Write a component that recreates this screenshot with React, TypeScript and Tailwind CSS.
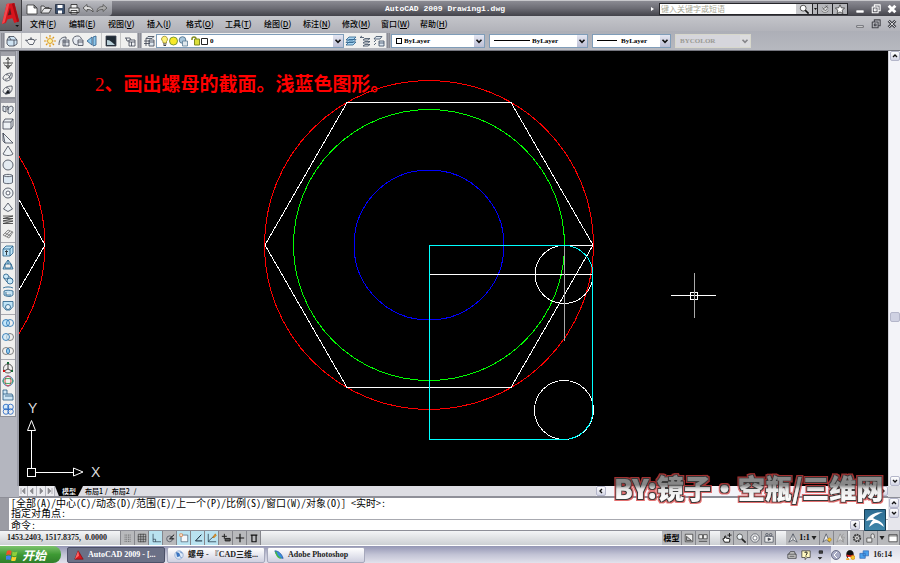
import type { ReactNode } from "react";

interface IconProps {
  children: ReactNode;
  size?: string;
}

function Icon({ children, size = "size-3" }: IconProps) {
  return (
    <svg viewBox="0 0 12 12" className={`${size} shrink-0`} fill="none" stroke="#3c4250" strokeWidth=".8" strokeLinejoin="round" aria-hidden="true">
      {children}
    </svg>
  );
}

interface Tool {
  label: string;
  icon: ReactNode;
  on?: boolean;
}

const quickAccess: Tool[] = [
  { label: "新建", icon: <path d="M1 2h7l3 3v6H1zM8 2v3h3" fill="#fff" stroke="#333" /> },
  { label: "打开", icon: <path d="M1 10V3h3l1 1.5h4V6M1 10l3-4.500h7.5L9 10z" fill="#e8e8ea" stroke="#333" /> },
  { label: "保存", icon: <><path d="M1.500 1.500h9v9h-9z" fill="#3b4f6c" stroke="#222b3b" /><path d="M3.500 2h5v3h-5zM4 7.500h4v3H4z" fill="#fff" stroke="none" /></> },
  { label: "打印", icon: <path d="M3 5V1.500h6V5M1 5h10v4.500H1zM3 7.500h6V11H3z" fill="#eee" stroke="#222" /> },
  { label: "放弃", icon: <path d="M1 5l4-3.500v2c4 0 6 2 6 5.500-1-2-3-2.500-6-2.500v2z" fill="#ddd" stroke="#444" /> },
  { label: "重做", icon: <path d="M11 5L7 1.500v2c-4 0-6 2-6 5.500 1-2 3-2.500 6-2.500v2z" fill="#aaa" stroke="#555" /> },
];

const menus = [
  ["文件", "F"],
  ["编辑", "E"],
  ["视图", "V"],
  ["插入", "I"],
  ["格式", "O"],
  ["工具", "T"],
  ["绘图", "D"],
  ["标注", "N"],
  ["修改", "M"],
  ["窗口", "W"],
  ["帮助", "H"],
];

const renderTools: Tool[][] = [
  [{ label: "隐藏", icon: <path d="M1 5l2-3.500h5L11 5v4l-3 2H3L1 9zM1 5h7v6M8 5h3M3 1.500L5 5" fill="#cfe3f2" /> }],
  [{ label: "渲染", icon: <path d="M3 4.500h6l.5 2-1.500 3H4.500L2.500 7 .5 5l2.500.5M9.500 6L11.500 4M5 4l1-1.500L7 4" fill="#f4f4f4" /> }],
  [
    { label: "光源", icon: <><circle cx="6" cy="6" r="2.500" fill="#fff3a0" stroke="#d08a10" /><path d="M6 0v2.500M6 9.500V12M0 6h2.500M9.500 6H12M2 2l1.500 1.500M8.500 8.500L10 10M10 2L8.500 3.500M2 10l1.500-1.500" stroke="#e09a18" strokeWidth="1.200" /></> },
    { label: "阳光特性", icon: <path d="M1 10c0-4 1-8 7-8v2M5 5h6v6H5zM5 7h6M7 5v6" fill="#e0e4ea" /> },
    { label: "材质", icon: <path d="M9.500 4A4.500 4.500 0 1 0 5 10M6 5h5v5.500H6zM6 7h5" fill="#e6eaf0" /> },
    { label: "贴图", icon: <path d="M1 6l5-4v8zM7 2l3-1v9l-3 1z" fill="#8cc6ea" stroke="#2d5c85" /> },
  ],
  [{ label: "渲染环境", icon: <><path d="M1 1h10v10H1z" fill="#1f2a34" /><path d="M2 10V5c3 0 5 2 8 5z" fill="#b8cfd8" stroke="none" /></> }],
  [{ label: "高级渲染设置", icon: <path d="M1 3h5l1 2M2 3l1 3h2M5 5h6v6H5zM5 7h6M7.500 7v4" fill="#eef0f3" /> }],
];

const layerTools: Tool[] = [
  { label: "置为当前", icon: <path d="M1 10l3-3h7l-3 3zM1 7.500l3-3h7l-3 3zM1 5l3-3h7L8 5z" fill="#a9d6f2" stroke="#2b5f8a" /> },
  { label: "上一个图层", icon: <path d="M1 2.500h4M1 2.500L3 1M4 5l2-1.500h5L9 5zM4 8l2-1.500h5L9 8zM4 11l2-1.500h5L9 11z" fill="#f3f3f3" stroke="#3a4a60" /> },
  { label: "图层状态", icon: <path d="M1 4l2-2.500h6L7 4zM1 7l2-2M1 10l2-2M6 6h5v5H6zM6 8h5" fill="#dbe5ee" stroke="#3a4a60" /> },
];

const orbitTools: Tool[] = [
  { label: "三维平移", icon: <path d="M6 .5v11M1 6h10M4 3l2-2.500L8 3M4 9l2 2.500L8 9M2 7.500c2 2 6 2 8 0" stroke="#222" /> },
  { label: "动态观察", icon: <path d="M1 8c0-4 4-6 9-6 1 5-2 8-6 8zM3 8c2 1 5-2 6-5M4 4c2-1 4 1 4 4" /> },
  { label: "连续观察", icon: <><path d="M1 8c0-4 4-6 9-6 1 5-2 8-6 8zM4 4c2-1 4 1 4 4" /><path d="M3 10l3-4 2 3z" fill="#111" /></> },
];

const modelTools: Tool[][] = [
  [
    { label: "多段体", icon: <path d="M1 2l3 1v5L1 7zM4 3l2-1v4M6 4l3-2 2 1v4l-3 3-2-1z" fill="#dfe6ec" /> },
    { label: "长方体", icon: <path d="M1 4l2-3h8v7l-2 3H1zM1 4h8v7M9 4l2-3" fill="#edf1f4" /> },
    { label: "楔体", icon: <path d="M1 1v8l2 2h8zM1 1l2 10" fill="#edf1f4" /> },
    { label: "圆锥体", icon: <path d="M6 1l5 8c-2 2-8 2-10 0z" fill="#edf1f4" /> },
    { label: "球体", icon: <circle cx="6" cy="6" r="5" fill="#e3eaf0" /> },
    { label: "圆柱体", icon: <path d="M1.500 2.500c1-1.500 8-1.500 9 0v7c-1 1.500-8 1.500-9 0zM1.500 2.500c1 1.500 8 1.500 9 0" fill="#dce8f2" /> },
    { label: "圆环体", icon: <><circle cx="6" cy="6" r="5" fill="#edf1f4" /><circle cx="6" cy="6" r="2" fill="#fff" /></> },
    { label: "棱锥体", icon: <path d="M6 2l4.500 6L6 10.500 1.500 8z" fill="#edf1f4" /> },
    { label: "螺旋", icon: <path d="M1 2h10L1 4.500h10L1 7h10L1 9.500h10" stroke="#333" /> },
    { label: "平面曲面", icon: <path d="M1 7l5-5 5 2-4 6zM3 8l5-5M5 9l5-5M3 5l6 3" fill="#e5e5e5" stroke="#777" /> },
  ],
  [
    { label: "拉伸", icon: <><path d="M1 4l3-3h7v7l-3 3H1zM1 4h7v7M8 4l3-3" fill="#bfe4f7" stroke="#1f5b86" /><path d="M4.500 10V6M3 7l1.500-1.500L6 7" stroke="#111" /></> },
    { label: "按住并拖动", icon: <path d="M1 10l2-5 3-4 3 4 2 5zM3 5v4h6V5zM6 1v4" fill="#bfe4f7" stroke="#1f5b86" /> },
    { label: "扫掠", icon: <><circle cx="4" cy="3.500" r="2.500" fill="#c9e8f8" stroke="#1f5b86" /><circle cx="8" cy="8" r="3" fill="#c9e8f8" stroke="#1f5b86" /><path d="M1.500 4.500L5 9M6.500 3L11 7" stroke="#1f5b86" /></> },
    { label: "旋转", icon: <path d="M1 2c3-1.500 7-1.500 10 0M2 5c2-1 6-1 9 0v4c-2 2-6 2-9 0zM4 6v3h5" fill="#c4e3f4" stroke="#1f5b86" /> },
    { label: "放样", icon: <><path d="M1 1.500h10v5L8 10H4L1 6.500z" fill="#bfe4f7" stroke="#1f5b86" /><circle cx="6" cy="7" r="2.500" fill="#e9f5fb" stroke="#1f5b86" /></> },
  ],
  [
    { label: "并集", icon: <><circle cx="4" cy="6" r="3.500" fill="#c4e6fa" stroke="#1c6db0" /><circle cx="8" cy="6" r="3.500" stroke="#1c6db0" /></> },
    { label: "差集", icon: <><circle cx="8" cy="6" r="3.500" stroke="#666" /><circle cx="4" cy="6" r="3.500" fill="#c4e6fa" fillOpacity=".6" stroke="#1c6db0" /></> },
    { label: "交集", icon: <><circle cx="4" cy="6" r="3.500" stroke="#666" /><circle cx="8" cy="6" r="3.500" stroke="#666" /><path d="M6 3c2 2 2 4 0 6-2-2-2-4 0-6z" fill="#8fcdf4" stroke="#1c6db0" /></> },
  ],
  [
    { label: "三维移动", icon: <><circle cx="6" cy="6.500" r="4.500" stroke="#333" /><path d="M6 1v6L2 9M6 7l4 2" stroke="#111" /><path d="M5 0h2v2H5zM9 8h2v2H9z" fill="#163" stroke="none" /><path d="M1 8h2v2H1z" fill="#c11" stroke="none" /></> },
    { label: "三维旋转", icon: <><circle cx="6" cy="6" r="5" stroke="#2563b0" /><ellipse cx="6" cy="6" rx="3" ry="5" stroke="#d22" /><ellipse cx="6" cy="6" rx="5" ry="2.500" stroke="#1a9a4a" /></> },
    { label: "三维对齐", icon: <path d="M1 1h4v4h5l1 2v4H1zM3 7h8M1 5h4" fill="#cfe6f5" stroke="#24577f" /> },
    { label: "三维阵列", icon: <><circle cx="4" cy="4" r="2.800" fill="#d4ebfa" stroke="#1c5fc0" /><circle cx="8.500" cy="4" r="2.800" stroke="#1c5fc0" /><circle cx="4" cy="8.500" r="2.800" stroke="#1c5fc0" /><circle cx="8.500" cy="8.500" r="2.800" stroke="#1c5fc0" /></> },
  ],
];

const draftingModes: Tool[] = [
  { label: "捕捉", icon: <path d="M2 2.500h8M2 5h8M2 7.500h8M2 10h8" strokeDasharray="1 1" stroke="#333" /> },
  { label: "栅格", icon: <path d="M1.500 1.500h9v9h-9zM4.500 1v10M7.500 1v10M1 4.500h10M1 7.500h10" stroke="#333" /> },
  { label: "正交", icon: <path d="M2.500 1v9.500H12M2.500 7.500h3v3" stroke="#234" />, on: true },
  { label: "极轴", icon: <><circle cx="5.500" cy="7" r="3.500" /><path d="M5.500 7L11 2M5.500 7H11" stroke="#111" strokeWidth="1.200" /></> },
  { label: "对象捕捉", icon: <><path d="M2.500 2.500h8v8h-8z" fill="#f4f8fb" stroke="#456" /><path d="M1 1h3v3H1z" fill="#fff" stroke="#e07020" /></>, on: true },
  { label: "对象追踪", icon: <path d="M10 2L3 9.500h8" stroke="#123" strokeWidth="1.200" />, on: true },
  { label: "动态 UCS", icon: <><path d="M1.500 1v9.500H11M1.500 10L8 4" stroke="#123" /><path d="M7 5l3-4 1 2-3 3z" fill="#e89a2a" stroke="#b06a10" /></>, on: true },
  { label: "动态输入", icon: <path d="M4 1v6M1 4h6M5 6.500h6v3H5z" fill="#555" stroke="#222" strokeWidth="1.200" /> },
  { label: "线宽", icon: <path d="M6 1v10M1 6h10" stroke="#111" strokeWidth="1.400" /> },
  { label: "快捷特性", icon: <path d="M2 2.500h8M3.500 3v7.500h5V3" stroke="#111" strokeWidth="1.400" /> },
];

const viewTools: Tool[] = [
  { label: "平移", icon: <path d="M3 11L1 7l2-.5V4l1.500-.5V6l5 1L9 11zM9 0v5M6.500 2.500h5" fill="#fff" stroke="#222" strokeWidth="1.200" /> },
  { label: "缩放", icon: <><circle cx="4.500" cy="4.500" r="3.300" fill="#eef4f8" stroke="#222" /><path d="M7 7l4.500 4.500" stroke="#222" strokeWidth="2" /></> },
  { label: "控制盘", icon: <><circle cx="6" cy="6" r="5" fill="#eee" /><circle cx="6" cy="6" r="2.500" fill="#fff" /></> },
  { label: "动画", icon: <><path d="M1 4h10v7H1z" fill="#eee" /><path d="M5 6l3 1.500L5 9z" fill="#333" /><circle cx="3.500" cy="2" r="1.500" /><circle cx="8" cy="2" r="1.500" /></> },
];

function ToolButton({ label, icon }: Tool) {
  return (
    <button type="button" aria-label={label} className="flex w-3.5 shrink-0 items-center justify-center">
      <Icon>{icon}</Icon>
    </button>
  );
}

type Direction = "up" | "down" | "left" | "right";

function Chevron({ direction = "down" }: { direction?: Direction }) {
  const paths = {
    up: "M3 7.500L6 4.500L9 7.500",
    down: "M3 4.500L6 7.500L9 4.500",
    left: "M7.500 3L4.500 6L7.500 9",
    right: "M4.500 3L7.500 6L4.500 9",
  };
  return (
    <svg viewBox="0 0 12 12" className="size-2.5" fill="none" stroke="#111" strokeWidth="2" aria-hidden="true">
      <path d={paths[direction]} />
    </svg>
  );
}

function ScrollButton({ direction, label }: { direction: Direction; label: string }) {
  return (
    <button type="button" aria-label={label} className="flex size-2.5 shrink-0 items-center justify-center rounded-xs border border-[#b4b6ca] bg-linear-to-b from-white to-[#d2d4e4]">
      <Chevron direction={direction} />
    </button>
  );
}

interface ComboProps {
  label: string;
  value: string;
  width: string;
  pad: string;
  disabled?: boolean;
  children?: ReactNode;
}

function Combo({ label, value, width, pad, disabled, children }: ComboProps) {
  return (
    <div className={`relative h-3.5 shrink-0 border ${width} ${disabled ? "border-[#d8d8cc] bg-[#d6d6dc]" : "border-[#7f9db9] bg-white"}`}>
      <select aria-label={label} disabled={disabled} className={`block h-full w-full appearance-none font-['Liberation_Serif',serif] text-[7px] leading-3 font-bold opacity-100 outline-none ${pad} ${disabled ? "text-[#9a9a94]" : "text-black"}`}>
        <option>{value}</option>
      </select>
      <div className="pointer-events-none absolute inset-y-0 left-1 flex items-center">{children}</div>
      <div className={`pointer-events-none absolute inset-y-0 right-0 flex w-2.5 items-center justify-center ${disabled ? "bg-[#e6e6e2] opacity-40" : "bg-linear-to-b from-[#e4e6f2] to-[#bcbfd4]"}`}>
        <Chevron />
      </div>
    </div>
  );
}

function Grip() {
  return <div className="mx-px w-[3px] shrink-0 border-x border-[#8b8c94] bg-[#9c9da5]" />;
}

function AppLogo() {
  return (
    <button type="button" aria-label="菜单浏览器" className="h-[31px] w-[22px] shrink-0 border-r border-b border-[#3c3c40] bg-linear-to-b from-[#88888c] to-[#5c5c60]">
      <svg viewBox="0 0 22 31" className="h-full w-full" aria-hidden="true">
        <path d="M7 4l8-1 5 19-5 2-2-5-5 1-2 4-4 1z" fill="#d8141c" />
        <path d="M7 4l3-1-5 20-3 2z" fill="#f0484e" />
        <path d="M10.500 8L12 15l-4 1z" fill="#5b1a1e" />
        <path d="M15 3l5 19-2 1-5.500-19z" fill="#a30c12" />
        <path d="M16 26h4l-2 2z" fill="#111" />
      </svg>
    </button>
  );
}

function WindowControls({ light }: { light?: boolean }) {
  const stroke = light ? "#fff" : "#44454c";
  const box = "flex w-4 items-center justify-center";
  return (
    <div className="flex shrink-0 items-center">
      <button type="button" aria-label="最小化" className={box}>
        <Icon size="size-2.5"><path d="M2 8h8v2H2z" fill={light ? "#fff" : "#eee"} stroke={stroke} /></Icon>
      </button>
      <button type="button" aria-label="还原" className={box}>
        <Icon size="size-2.5"><path d="M4 3V1h7v7H9M1.500 3.500h7v7h-7zM4 6h2v2H4z" stroke={stroke} strokeWidth="1.300" /></Icon>
      </button>
      <button type="button" aria-label="关闭" className={box}>
        <Icon size="size-2.5">
          <path d="M2 2l8 8M10 2l-8 8" stroke={stroke} strokeWidth="3.500" />
          {!light && <path d="M2 2l8 8M10 2l-8 8" stroke="#eee" strokeWidth="1" />}
        </Icon>
      </button>
    </div>
  );
}

function Header() {
  return (
    <header className="flex shrink-0">
      <AppLogo />
      <div className="min-w-0 flex-1">
        <div className="grid h-4 grid-cols-[363px_1fr_auto] items-center border-t border-[#c8c8cc] bg-linear-to-b from-[#8b8b93] via-[#6c6c74] to-[#424249]">
          <div className="flex h-full w-[90px] items-center justify-center gap-0.5 rounded-br-sm bg-linear-to-b from-[#b9bac0] to-[#8a8b92]">
            {quickAccess.map((tool) => (
              <button key={tool.label} type="button" aria-label={tool.label}>
                <Icon>{tool.icon}</Icon>
              </button>
            ))}
          </div>
          <h1 className="font-['Liberation_Mono',monospace] text-[8px] font-bold whitespace-nowrap text-white">AutoCAD 2009 Drawing1.dwg</h1>
          <div className="flex h-full items-center gap-1">
            <svg viewBox="0 0 4 6" className="h-1.5 w-1" aria-hidden="true"><path d="M0 1l3 2-3 2z" fill="#fff" /></svg>
            <div className="flex h-3 border border-[#26262a] bg-[#26262a]">
              <input aria-label="搜索" placeholder="键入关键字或短语" className="w-[136px] bg-white pl-px font-['Noto_Sans_CJK_SC',sans-serif] text-[8px] leading-2.5 outline-none placeholder:text-[#a8a896]" />
              <button type="button" aria-label="查找" className="flex w-4 items-center justify-center bg-[#c9cacd]">
                <Icon size="size-2.5"><circle cx="5" cy="5" r="3.500" stroke="#111" fill="#fff" /><path d="M7.500 7.500l4 4" stroke="#111" strokeWidth="2" /></Icon>
              </button>
              <button type="button" aria-label="查找选项" className="mx-px w-1 bg-[#b5b6ba]">
                <svg viewBox="0 0 4 4" className="w-1" aria-hidden="true"><path d="M1 1h3L2.500 3z" fill="#111" /></svg>
              </button>
              <button type="button" aria-label="通讯中心" className="mr-px flex w-3.5 items-center justify-center bg-[#b5b6ba]">
                <Icon size="size-2.5"><path d="M2 8c2 3 7 2 8 0M4 6l5-4M3 4l3 4 3-2M7 2l3 3" stroke="#444" fill="#eee" /></Icon>
              </button>
              <button type="button" aria-label="收藏夹" className="flex w-3.5 items-center justify-center bg-[#b5b6ba]">
                <Icon size="size-2.5"><path d="M6 1l1.500 3.500 4 .5-3 2.500 1 4L6 9.500l-3.500 2 1-4L.5 5l4-.5z" fill="#fff" stroke="#222" /></Icon>
              </button>
            </div>
            <WindowControls light />
          </div>
        </div>
        <div className="flex h-[15px] items-center justify-between bg-linear-to-b from-[#c4c5ca] to-[#b2b3ba]">
          <nav className="flex pl-2">
            {menus.map(([name, key]) => (
              <button key={name} type="button" className="w-[39px] shrink-0 text-left font-['Noto_Sans_CJK_SC',sans-serif] text-[8px] leading-3 font-medium whitespace-nowrap text-black">
                {name}(<u>{key}</u>)
              </button>
            ))}
          </nav>
          <WindowControls />
        </div>
      </div>
    </header>
  );
}

function Toolbar() {
  return (
    <div className="flex h-5 shrink-0 items-stretch border-b border-[#74757e] bg-linear-to-b from-[#adafb7] to-[#b6b8bf] py-0.5">
      <Grip />
      <div className="flex w-[132px] shrink-0 justify-between bg-[#f0f0ef]">
        {renderTools.map((group) => (
          <div key={group[0].label} className="flex border-r border-[#c8c8c8] px-0.5 first:pl-0 last:border-r-0">
            {group.map((tool) => (
              <ToolButton key={tool.label} {...tool} />
            ))}
          </div>
        ))}
      </div>
      <Grip />
      <div className="flex shrink-0 items-center bg-[#f0f0ef]">
        <ToolButton label="图层特性" icon={<path d="M3 3.500l2-2h6l-2 2zM1 6h6M1 8.500h6M3 3.500V11M6 5h5v6H6zM6 7h5" fill="#dde6ee" />} />
        <Combo label="图层" value="0" width="w-[188px]" pad="pl-[53px]">
          <svg viewBox="0 0 48 12" className="h-3 w-12" aria-hidden="true">
            <path d="M.5 4a3 3 0 1 1 5 2.500V8H2V6.500A3 3 0 0 1 .5 4z" fill="#fdf27a" stroke="#8a7a10" strokeWidth=".7" />
            <path d="M2 9h3.500M2.500 10.500H5" stroke="#444" />
            <circle cx="12.500" cy="6" r="4" fill="#f7e928" stroke="#7c9a34" />
            <circle cx="21.500" cy="5" r="3.300" fill="#a9c7dc" stroke="#5d7d96" />
            <path d="M21.500 6h5v5h-5z" fill="#dfe8ee" stroke="#5d7d96" strokeWidth=".8" />
            <path d="M31 5V4a2 2 0 0 1 4 0v4" fill="none" stroke="#7f8a20" strokeWidth="1.500" />
            <path d="M33.500 4h5v6h-5z" fill="#dce03a" stroke="#7f8a20" />
            <path d="M40.500 3.500h6v6h-6z" fill="#fff" stroke="#222" />
          </svg>
        </Combo>
        {layerTools.map((tool) => (
          <ToolButton key={tool.label} {...tool} />
        ))}
      </div>
      <Grip />
      <div className="flex items-center gap-1">
        <Combo label="颜色" value="ByLayer" width="w-[94px]" pad="pl-3">
          <span className="size-1.5 border border-black bg-white" />
        </Combo>
        <Combo label="线型" value="ByLayer" width="w-[99px]" pad="pl-[42px]">
          <span className="h-px w-9 bg-black" />
        </Combo>
        <Combo label="线宽" value="ByLayer" width="w-[79px]" pad="pl-[28px]">
          <span className="h-px w-5 bg-black" />
        </Combo>
        <Combo label="打印样式" value="BYCOLOR" width="w-[76px]" pad="pl-1" disabled />
      </div>
    </div>
  );
}

function SideButton({ label, icon }: Tool) {
  return (
    <button type="button" aria-label={label} className="flex min-h-0 flex-1 items-center justify-center">
      <Icon>{icon}</Icon>
    </button>
  );
}

function SideBar() {
  const panel = "flex w-4 shrink-0 flex-col border border-[#8e9098] bg-[#f0f0ef]";
  return (
    <aside className="w-[19px] shrink-0 border-r-2 border-[#9a9ca6] bg-[#b4b6bf]">
      <div className={`${panel} h-[47px]`}>
        <div className="h-1 shrink-0 bg-[#a0a1a9]" />
        {orbitTools.map((tool) => (
          <SideButton key={tool.label} {...tool} />
        ))}
      </div>
      <div className={`${panel} h-[319px]`}>
        <div className="h-1 shrink-0 bg-[#a0a1a9]" />
        {modelTools.map((group, i) => (
          <div key={group[0].label} className="contents">
            {i > 0 && <div className="my-px h-px shrink-0 bg-[#a8a9b0]" />}
            {group.map((tool) => (
              <SideButton key={tool.label} {...tool} />
            ))}
          </div>
        ))}
      </div>
    </aside>
  );
}

function Drawing() {
  return (
    <svg viewBox="19 51 869 435" width="869" height="435" className="block max-w-none" fill="none" strokeWidth="1" shapeRendering="crispEdges">
      {/* neighbouring nut, cut off by the viewport */}
      <circle cx="-119" cy="245" r="164" stroke="#f00" />
      <path d="M-37 102L45 245L-37 387" stroke="#fff" />

      <circle cx="429" cy="245" r="164.500" stroke="#f00" />
      <circle cx="429" cy="245" r="135.500" stroke="#0f0" />
      <circle cx="429" cy="245" r="75" stroke="#00f" />
      <path d="M265 245L347 102.500H511L593 245L511 387.500H347Z" stroke="#fff" />

      {/* section profile */}
      <circle cx="564" cy="274.500" r="29" stroke="#fff" />
      <circle cx="564" cy="410" r="29.500" stroke="#fff" />
      <path d="M429 274.500H593M564 245.500H593" stroke="#fff" />
      <path d="M564.500 245V341" stroke="#a8a8a8" />
      <g stroke="#0ff">
        <path d="M429 245.500H564" />
        <path d="M429.500 245V440" />
        <path d="M429 439.500H564" />
        <path d="M592.500 274V410" />
        <path d="M564 245.500A29 29 0 0 1 593 274.500" />
        <path d="M593 410A29.500 29.500 0 0 1 564 439.500" />
      </g>

      {/* cursor */}
      <path d="M671 295.500H716M690.500 292.500H697.500V299.500H690.500Z" stroke="#fff" />
      <path d="M694.500 273V318" stroke="#aaa" />

      {/* UCS icon */}
      <path d="M27.500 468.500h8v8h-8zM31.500 468V431M36 472.500H73" stroke="#fff" />
      <path d="M31.500 420.500L35.500 430.500H27.500ZM83 472L73.500 468V476Z" stroke="#fff" shapeRendering="auto" />
      <g fill="#ddd" fontFamily="Liberation Sans, sans-serif" fontSize="14">
        <text x="28" y="413">Y</text>
        <text x="91" y="477">X</text>
      </g>
      <text x="95" y="91" fill="#f00" fontFamily="Liberation Serif, Noto Sans CJK SC, serif" fontSize="19" fontWeight="bold">
        <tspan fontWeight="normal">2</tspan>、画出螺母的截面。浅蓝色图形。
      </text>
    </svg>
  );
}

function LayoutTabs() {
  return (
    <div className="flex h-[11px] shrink-0 items-center border-b border-[#8e8f98] bg-[#dddde3] font-['Noto_Sans_CJK_SC',sans-serif] text-[7px] leading-2.5 font-medium">
      {[
        { label: "第一个布局", path: "M2 1v6M6 1L3 4l3 3z" },
        { label: "前一个布局", path: "M5 1L2 4l3 3z" },
        { label: "后一个布局", path: "M3 1l3 3-3 3z" },
        { label: "最后一个布局", path: "M2 1l3 3-3 3zM6 1v6" },
      ].map(({ label, path }) => (
        <button key={label} type="button" aria-label={label} className="flex h-full w-[9px] items-center justify-center border-r border-[#b4b5bd] bg-[#ececf0]">
          <svg viewBox="0 0 8 8" className="size-2" fill="#8c8c90" stroke="#8c8c90" strokeWidth=".6" aria-hidden="true"><path d={path} /></svg>
        </button>
      ))}
      <button type="button" className="h-full bg-black px-[7px] text-white [clip-path:polygon(0_0,100%_0,82%_100%,14%_100%)]">模型</button>
      <button type="button" className="px-0.5">布局1</button>
      <span>/</span>
      <button type="button" className="px-1">布局2</button>
      <span>/</span>
      <div className="flex-1" />
      <div className="flex w-[292px] shrink-0 items-center justify-between bg-[#f3f3f8]">
        <ScrollButton direction="left" label="向左滚动" />
        <ScrollButton direction="right" label="向右滚动" />
      </div>
    </div>
  );
}

function CommandWindow() {
  return (
    <section aria-label="命令行" className="flex h-[34px] shrink-0 border-y border-[#8e8f98] bg-[#9b9ca4]">
      <div className="w-[9px] shrink-0" />
      <div className="flex min-w-0 flex-1 flex-col bg-white pl-0.5 font-['Noto_Sans_CJK_SC',sans-serif] text-[10px] leading-2.5 whitespace-pre text-black [font-feature-settings:'hwid']">
        <p>[全部(A)/中心(C)/动态(D)/范围(E)/上一个(P)/比例(S)/窗口(W)/对象(O)] &lt;实时&gt;:</p>
        <p>指定对角点:</p>
        <div className="mt-px flex items-center border-t border-[#a8a9b0]">
          <label htmlFor="command" className="leading-2.5">命令:</label>
          <input id="command" className="h-2.5 min-w-0 flex-1 outline-none" />
          <ScrollButton direction="left" label="命令行左移" />
          <div className="w-7" />
        </div>
      </div>
      <div className="flex w-3 shrink-0 flex-col items-center bg-[#e6e6ec]">
        <ScrollButton direction="up" label="命令行上移" />
        <ScrollButton direction="down" label="命令行下移" />
      </div>
    </section>
  );
}

function StatusButton({ label, icon, on }: Tool) {
  return (
    <button type="button" aria-label={label} aria-pressed={on} className={`flex h-full w-3.5 shrink-0 items-center justify-center border-r border-[#85868c] ${on ? "bg-[#b9e2f0]" : "bg-[#b8b9bc]"}`}>
      <Icon size="size-2.5">{icon}</Icon>
    </button>
  );
}

function StatusBar() {
  return (
    <div className="flex h-[14px] shrink-0 items-stretch bg-linear-to-b from-[#f4f5f6] to-[#cdd0d4]">
      <output className="w-[120px] shrink-0 pl-[7px] font-['Liberation_Serif',serif] text-[8px] leading-3.5 font-bold whitespace-nowrap text-[#222]">1453.2403, 1517.8375,&nbsp; 0.0000</output>
      <div className="flex border-l border-[#85868c]">
        {draftingModes.map((mode) => (
          <StatusButton key={mode.label} {...mode} />
        ))}
      </div>
      <div className="flex-1" />
      <div className="flex gap-2.5">
        <div className="flex">
          <button type="button" className="w-5 border-r border-[#85868c] bg-[#b8b9bc] font-['Noto_Sans_CJK_SC',sans-serif] text-[8px] leading-3.5 font-bold">模型</button>
          <StatusButton label="布局" icon={<path d="M1.500 1.500h9v9h-9zM3 9h6L3 4z" fill="#eee" stroke="#222" />} />
          <StatusButton label="快速查看" icon={<path d="M1 2h4.500v5H1zM6.500 2H11v5H6.500zM1 10h10" fill="#eee" stroke="#222" />} />
        </div>
        <div className="flex">
          {viewTools.map((tool) => (
            <StatusButton key={tool.label} {...tool} />
          ))}
        </div>
        <div className="flex">
          <button type="button" className="flex w-[34px] items-center justify-center gap-px border-r border-[#85868c] bg-[#b8b9bc] font-['Liberation_Serif',serif] text-[8px] font-bold">
            <Icon size="size-2.5"><path d="M6 1L1 11l5-3 5 3zM6 1v7" fill="#eee" /></Icon>
            1:1
            <svg viewBox="0 0 5 4" className="h-1 w-1.5" aria-hidden="true"><path d="M0 0h5L2.500 4z" fill="#222" /></svg>
          </button>
          <StatusButton label="注释可见性" icon={<><path d="M5 1L1 11l4-3 4 3z" fill="#eee" /><circle cx="9" cy="8" r="2" fill="#f6c32c" stroke="#b98b10" /></>} />
          <StatusButton label="自动缩放" icon={<path d="M5 1L1 11l4-3 4 3zM9 1L7 5h3L8 10" fill="#ddd" stroke="#888" />} />
          <div className="w-0.5" />
          <StatusButton label="切换工作空间" icon={<><circle cx="6" cy="6" r="4" strokeWidth="2" strokeDasharray="2 1" stroke="#333" /><circle cx="6" cy="6" r="3" fill="#eee" stroke="#333" /><circle cx="6" cy="6" r="1" stroke="#333" /></>} />
          <StatusButton label="锁定" icon={<path d="M1 6h6v5H1zM6 6V3a2 2 0 0 1 4 0v3" fill="#e8e8e8" stroke="#333" />} />
          <button type="button" aria-label="状态栏菜单" className="flex w-2 items-center justify-center bg-[#b8b9bc]">
            <svg viewBox="0 0 5 4" className="h-1 w-1.5" aria-hidden="true"><path d="M0 0h5L2.500 4z" fill="#222" /></svg>
          </button>
          <StatusButton label="全屏显示" icon={<path d="M1 2h10v8.500H1zM1 3.500h10" fill="#fff" stroke="#222" />} />
        </div>
      </div>
    </div>
  );
}

const tasks = [
  {
    name: "AutoCAD 2009 - [...",
    active: true,
    icon: <><path d="M1 11L5 1l6 10z" fill="#d9141c" stroke="#7c0a0e" /><path d="M1 11L5 1l1 6z" fill="#f66" stroke="none" /></>,
  },
  {
    name: "螺母 - 『CAD三维...",
    icon: <><circle cx="6" cy="6" r="5" fill="#dfeaf8" stroke="#7c9cc8" /><path d="M3 3l3 1 1 3-3 1zM7 2l3 2M7 8l2 1" fill="#3a78c8" stroke="#2c64b0" /></>,
  },
  {
    name: "Adobe Photoshop",
    icon: <><path d="M1 1c4 0 8 3 10 9-5 0-8-3-10-9z" fill="#3b8de0" stroke="#1b4f98" /><path d="M2 2c1 4 3 7 6 8" stroke="#46b84a" strokeWidth="2" /></>,
  },
];

function TaskBar() {
  return (
    <footer className="flex h-[18px] shrink-0 items-center border-t border-white bg-linear-to-b from-[#9496b4] via-[#c2c3d5] to-[#e2e2ec]">
      <button type="button" className="mr-1.5 flex h-full w-[61px] shrink-0 items-center gap-1 rounded-r-lg bg-linear-to-b from-[#7cc36c] via-[#3e9a34] to-[#2f7f2a] pl-1.5 font-['Noto_Sans_CJK_SC',sans-serif] text-[12px] leading-4 font-bold text-white italic">
        <svg viewBox="0 0 12 12" className="size-3" aria-hidden="true">
          <path d="M1 2q2-1.500 4.500 0L5 6Q3 5 0 6z" fill="#f0512a" />
          <path d="M6.500 2.500q2 1.500 5 0l-1 4q-2 1.500-4.500 0z" fill="#8cd03c" />
          <path d="M0 7q3-1 5 0l-.5 4Q2 10-1 11z" fill="#3f7ff0" />
          <path d="M6 7.500q2 1.500 4.500 0l-1 4q-2 1-4.500 0z" fill="#fbd02c" />
        </svg>
        开始
      </button>
      <div className="flex gap-0.5">
        {tasks.map((task) => (
          <button
            key={task.name}
            type="button"
            className={`flex h-4 w-[98px] shrink-0 items-center gap-1 rounded-xs border pl-1.5 font-['Liberation_Serif','Noto_Sans_CJK_SC',serif] text-[8px] leading-3 font-bold whitespace-nowrap ${task.active ? "border-[#4c5068] bg-[#6b7086] text-white" : "border-[#a6a8bc] bg-linear-to-b from-white to-[#cfd0e0] text-[#222]"}`}
          >
            <Icon size="size-2.5">{task.icon}</Icon>
            {task.name}
          </button>
        ))}
      </div>
      <div className="flex-1" />
      <div className="flex items-center gap-1 pr-1.5">
        <Icon size="size-2.5"><path d="M1 5h10v5H1zM2 5l2-3h5l1 3M3 7.500h6" fill="#ccc" stroke="#222" /></Icon>
        <Icon size="size-2.5"><path d="M1 1h10v8H7l-2 2.500V9H1z" fill="#fff9c0" stroke="#222" /><path d="M4.500 3.500c0-1.500 3-1.500 3 0S6 5 6 6.500M6 7v1" stroke="#111" strokeWidth="1.200" /></Icon>
        <Icon size="size-2.5"><path d="M5 1h4v3H5zM4 9h4l-2 2z" fill="#444" stroke="#111" /></Icon>
      </div>
      <div className="flex h-full items-center gap-1 bg-linear-to-b from-[#dcdde8] to-[#f4f4f8] pr-2">
        <button type="button" aria-label="显示隐藏的图标" className="flex size-2.5 items-center justify-center rounded-full border border-[#6d7088] bg-[#a8abc4]">
          <svg viewBox="0 0 6 6" className="size-1.5" aria-hidden="true"><path d="M4 0L1 3l3 3" fill="none" stroke="#fff" strokeWidth="1" /></svg>
        </button>
        <Icon size="size-2.5"><ellipse cx="6" cy="5.500" rx="4" ry="5" fill="#111" stroke="#111" /><ellipse cx="6" cy="9" rx="2.500" ry="2" fill="#fff" stroke="none" /><path d="M2 5.500q4 2 8 0v2q-4 2-8 0z" fill="#e01818" stroke="none" /><path d="M1.500 11h3.500" stroke="#f2a51c" strokeWidth="2" /><circle cx="9.500" cy="9" r="2.500" fill="#f6c32c" stroke="#c98a10" /></Icon>
        <Icon size="size-2.5"><path d="M5 1h6.500v6H5zM1 4h6.500v6H1z" fill="#4aa0ec" stroke="#2c64b0" /></Icon>
        <time className="font-['Liberation_Serif',serif] text-[8px] leading-3 font-bold text-[#222]">16:14</time>
      </div>
    </footer>
  );
}

function Watermark() {
  return (
    <div className="pointer-events-none absolute right-3 bottom-[32px]">
      <svg viewBox="0 -24 276 80" width="276" height="80" className="block" aria-label="BY:镜子·空瓶/三维网">
        <defs>
          <linearGradient id="steel" gradientUnits="userSpaceOnUse" x1="0" y1="2" x2="0" y2="22">
            <stop offset="0" stopColor="#8a8a8a" />
            <stop offset=".4" stopColor="#868686" />
            <stop offset=".6" stopColor="#e4e4e4" />
            <stop offset="1" stopColor="#fafafa" />
          </linearGradient>
          <linearGradient id="swallow" x1="0" y1="0" x2="0" y2="1">
            <stop offset="0" stopColor="#2d6c92" />
            <stop offset="1" stopColor="#3f88ac" />
          </linearGradient>
          {/* dark rim hugging the letters, then a thin red one around it */}
          <filter id="rim" x="-5%" y="-30%" width="110%" height="160%">
            <feMorphology in="SourceAlpha" operator="dilate" radius="2" result="outer" />
            <feFlood floodColor="#d84040" floodOpacity=".75" />
            <feComposite in2="outer" operator="in" result="red" />
            <feMorphology in="SourceAlpha" operator="dilate" radius="1" result="inner" />
            <feFlood floodColor="#3a3a3a" />
            <feComposite in2="inner" operator="in" result="dark" />
            <feMerge>
              <feMergeNode in="red" />
              <feMergeNode in="dark" />
              <feMergeNode in="SourceGraphic" />
            </feMerge>
          </filter>
        </defs>
        <text x="2" y="24" fill="url(#steel)" filter="url(#rim)" fontFamily="Noto Sans CJK SC, sans-serif" fontSize="27" fontWeight="900">
          BY:镜子·空瓶/三维网
        </text>
        <path d="M252.500 34.500h21v21h-21z" fill="url(#swallow)" stroke="#173d52" />
        <path d="M271 37c-8 0-14 3-17 9 3-1 5-1 7-1-2 2-3 4-4 7 3-2 5-4 7-4 3 0 5 2 8 4-1-4-4-6-7-7-2-1-3-1-4-2 3-3 6-4 10-6z" fill="#fff" />
      </svg>
    </div>
  );
}

export default function App() {
  return (
    <div className="relative flex h-screen flex-col overflow-hidden bg-[#b4b6bf] select-none">
      <Header />
      <Toolbar />
      <main className="flex min-h-0 flex-1">
        <SideBar />
        <div className="min-w-0 flex-1 overflow-hidden bg-black">
          <Drawing />
        </div>
        <div className="flex w-3 shrink-0 flex-col items-center justify-between border-l border-[#d0d0d8] bg-[#f3f3f8]">
          <ScrollButton direction="up" label="向上滚动" />
          <div className="mt-24 size-2.5 rounded-xs border border-[#b4b6ca] bg-[#cfd1e2]" />
          <ScrollButton direction="down" label="向下滚动" />
        </div>
      </main>
      <div className="flex shrink-0">
        <div className="w-[19px] shrink-0" />
        <div className="min-w-0 flex-1">
          <LayoutTabs />
        </div>
        <div className="w-3 shrink-0 bg-[#dddde3]" />
      </div>
      <CommandWindow />
      <StatusBar />
      <TaskBar />
      <Watermark />
    </div>
  );
}
